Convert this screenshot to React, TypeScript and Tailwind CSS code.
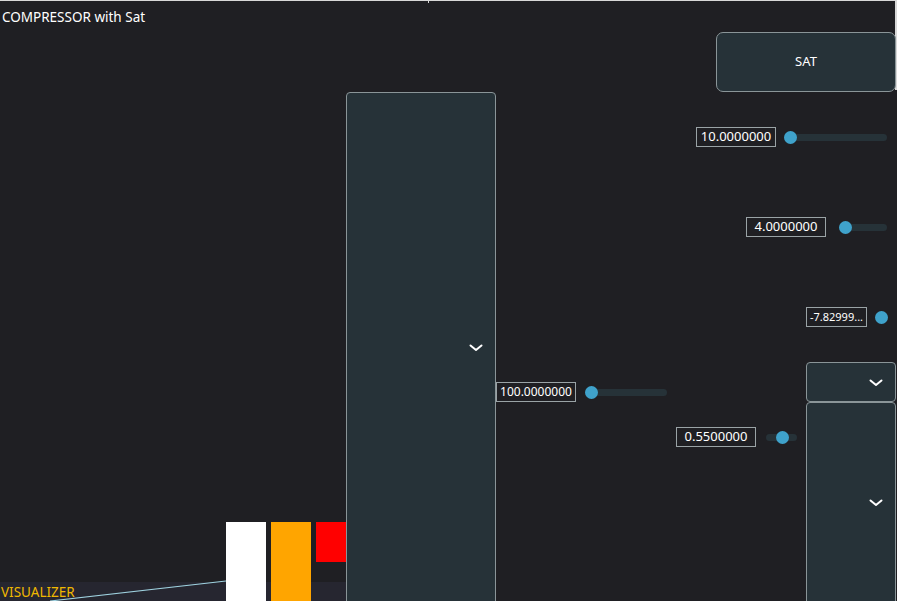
import React from "react";

const font = { fontFamily: '"Noto Sans", "Open Sans", sans-serif' };

function Chevron() {
  return (
    <svg width="14" height="8" viewBox="0 0 14 8">
      <path d="M1.5 1.5 L7 6 L12.5 1.5" fill="none" stroke="#ffffff" strokeWidth="2" strokeLinecap="round" strokeLinejoin="round" />
    </svg>
  );
}

function ValueBox({ text, size = "text-[13px]", width = "w-[80px]" }: { text: string; size?: string; width?: string }) {
  return (
    <div className={`flex h-[20px] shrink-0 items-center justify-center border border-[#9aa3a6] text-white ${size} ${width}`}>
      {text}
    </div>
  );
}

function Thumb() {
  return <div className="relative h-[13px] w-[13px] shrink-0 rounded-full bg-[#3fa2cb]" />;
}

function Track({ width, pad = "" }: { width: string; pad?: string }) {
  return (
    <div className={`relative flex h-[14px] items-center ${width} ${pad}`}>
      <div className="absolute inset-x-0 h-[7px] rounded-full bg-[#263238]" />
      <Thumb />
    </div>
  );
}

function Selector({ className, chevronTop }: { className: string; chevronTop: string }) {
  return (
    <div className={`absolute flex justify-end rounded-[4px] border border-[#8a9598] bg-[#263238] pr-[12px] ${className}`}>
      <div className={chevronTop}>
        <Chevron />
      </div>
    </div>
  );
}

export default function App() {
  return (
    <div className="relative h-[601px] w-[897px] overflow-hidden bg-[#1f1f23]" style={font}>
      {/* window frame edge */}
      <div className="absolute inset-x-0 top-0 h-[1px] bg-[#d8d8d8]" />
      <div className="absolute left-[428px] top-0 h-[3px] w-[1px] bg-[#d8d8d8]" />
      <div className="absolute right-0 top-0 h-[90px] w-[2px] bg-[#d8d8d8]" />

      <div className="absolute left-[2px] top-[7px] text-[13.5px] leading-[20px] text-white">COMPRESSOR with Sat</div>

      {/* saturation toggle */}
      <div className="absolute left-[716px] top-[32px] flex h-[60px] w-[180px] items-center justify-center rounded-[7px] border border-[#8a9598] bg-[#263238] text-[13px] text-white">
        SAT
      </div>

      {/* mode selector */}
      <Selector className="left-[346px] top-[92px] h-[520px] w-[150px]" chevronTop="pt-[251px]" />

      {/* threshold */}
      <div className="absolute left-[696px] top-[127px] flex items-center gap-[8px]">
        <ValueBox text="10.0000000" />
        <Track width="w-[103px]" />
      </div>

      {/* ratio */}
      <div className="absolute left-[746px] top-[217px] flex items-center gap-[13px]">
        <ValueBox text="4.0000000" />
        <Track width="w-[48px]" />
      </div>

      {/* makeup */}
      <div className="absolute left-[806px] top-[307px] flex items-center gap-[8px]">
        <ValueBox text="-7.82999..." size="text-[11px]" width="w-[61px]" />
        <Thumb />
      </div>

      {/* release */}
      <div className="absolute left-[496px] top-[382px] flex items-center gap-[9px]">
        <ValueBox text="100.0000000" size="text-[12px]" />
        <Track width="w-[82px]" />
      </div>

      {/* knee */}
      <div className="absolute left-[676px] top-[427px] flex items-center gap-[10px]">
        <ValueBox text="0.5500000" />
        <Track width="w-[31px]" pad="pl-[10px]" />
      </div>

      {/* small selectors */}
      <Selector className="left-[806px] top-[362px] h-[40px] w-[90px]" chevronTop="pt-[16px]" />
      <Selector className="left-[806px] top-[402px] h-[210px] w-[90px]" chevronTop="pt-[96px]" />

      {/* visualizer */}
      <div className="absolute bottom-0 left-0 h-[19px] w-[346px] bg-[#262630]" />
      <svg className="absolute left-0 top-0" width="346" height="601">
        <line x1="50" y1="601" x2="226" y2="581" stroke="#9fd2e0" strokeWidth="1.2" />
      </svg>
      <div className="absolute left-[1px] top-[584px] text-[13.5px] leading-[17px] text-[#f0b800]">VISUALIZER</div>
      <div className="absolute bottom-0 left-[226px] flex items-start gap-[5px]">
        <div className="h-[79px] w-[40px] bg-white" />
        <div className="h-[79px] w-[40px] bg-[#ffa500]" />
        <div className="h-[40px] w-[30px] bg-[#ff0000]" />
      </div>
    </div>
  );
}
